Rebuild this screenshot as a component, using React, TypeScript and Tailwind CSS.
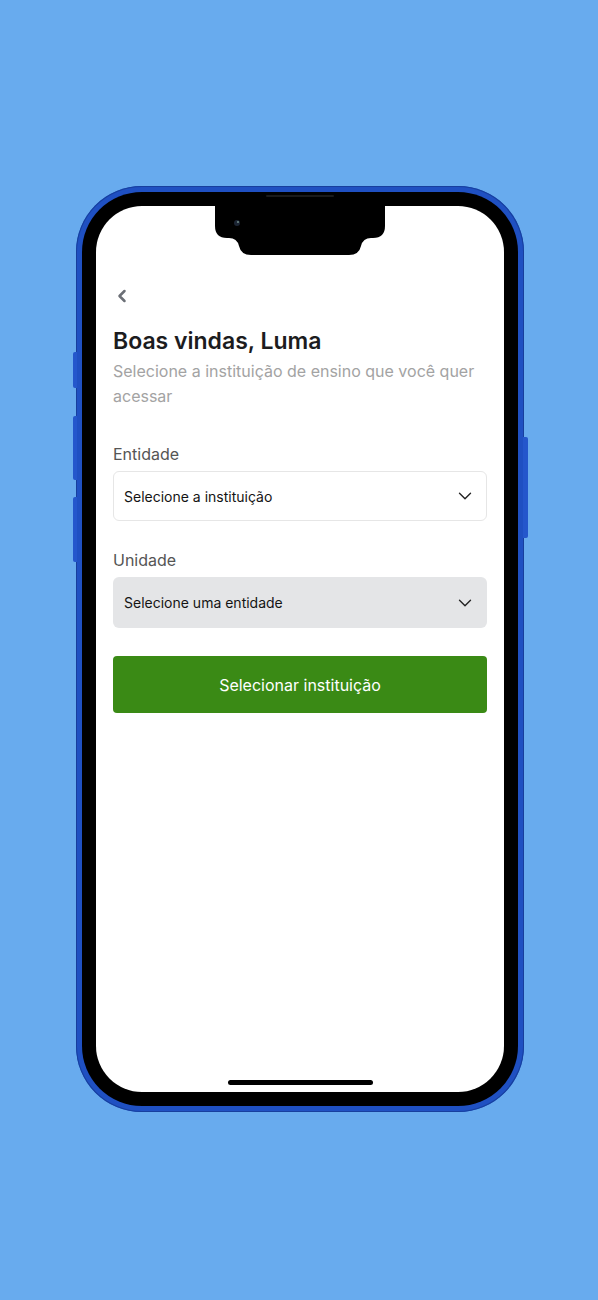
import React from 'react';
import { ChevronDown, ChevronLeft } from 'lucide-react';

const SelectBox: React.FC<{ text: string; disabled?: boolean }> = ({ text, disabled }) => (
  <div
    className={
      disabled
        ? 'flex h-[51px] items-center justify-between rounded-[6px] bg-[#e4e5e7] pl-[11px] pr-[11px]'
        : 'flex h-[50px] items-center justify-between rounded-[6px] border border-[#e6e6e6] bg-white pl-[10px] pr-[10px]'
    }
  >
    <span className="text-[14px] text-[#141414]">{text}</span>
    <ChevronDown className="h-[22px] w-[22px] text-[#222]" strokeWidth={1.5} />
  </div>
);

const App: React.FC = () => {
  return (
    <div
      className="flex h-[1300px] w-full justify-center bg-[#68abee] pt-[186px]"
      style={{ fontFamily: 'Inter, "Noto Sans", sans-serif' }}
    >
      {/* Phone frame */}
      <div className="relative ml-[2px] h-[926px] w-[448px] rounded-[66px] bg-[#1f50c2] p-[6px] shadow-[inset_0_0_0_1px_#173f9e]">
        {/* side buttons */}
        <div className="absolute left-[-3px] top-[166px] h-[36px] w-[4px] rounded-l-[2px] bg-[#2457cc]" />
        <div className="absolute left-[-3px] top-[230px] h-[64px] w-[4px] rounded-l-[2px] bg-[#2457cc]" />
        <div className="absolute left-[-3px] top-[311px] h-[65px] w-[4px] rounded-l-[2px] bg-[#2457cc]" />
        <div className="absolute right-[-4px] top-[251px] h-[101px] w-[5px] rounded-r-[2px] bg-[#2457cc]" />

        <div className="h-full w-full rounded-[60px] bg-black p-[14px]">
          {/* speaker */}
          <div className="absolute left-[190px] top-[9px] h-[2px] w-[68px] rounded-full bg-[#1a1a1a]" />

          <div className="relative flex h-full flex-col overflow-hidden rounded-[46px] bg-white px-[17px] pt-[78px]">
            {/* notch */}
            <svg className="absolute left-[119px] top-0" width="170" height="49" viewBox="0 0 170 49">
              <path
                d="M-8,0 H178 Q170,0 170,8 V20 Q170,32 158,32 H156 Q148,32 146,40 Q144,49 134,49 H36 Q26,49 24,40 Q22,32 14,32 H12 Q0,32 0,20 V8 Q0,0 -8,0 Z"
                fill="#000"
              />
              <circle cx="22" cy="17" r="3" fill="#1b2433" />
              <circle cx="23" cy="16" r="1" fill="#6f8a86" />
            </svg>

            <div className="flex h-[24px] items-center">
              <ChevronLeft className="ml-[-1px] h-[20px] w-[20px] text-[#6b6f76]" strokeWidth={3} />
            </div>

            <h1 className="mt-[18px] text-[23px] font-semibold leading-[30px] text-[#1c1c1e]">
              Boas vindas, Luma
            </h1>
            <p className="mt-[3px] text-[16px] leading-[25px] text-[#a3a3a3]">
              Selecione a instituição de ensino que você quer acessar
            </p>

            <label className="mt-[33px] text-[16px] leading-[24px] text-[#555]">Entidade</label>
            <div className="mt-[5px]">
              <SelectBox text="Selecione a instituição" />
            </div>

            <label className="mt-[27px] text-[16px] leading-[24px] text-[#555]">Unidade</label>
            <div className="mt-[5px]">
              <SelectBox text="Selecione uma entidade" disabled />
            </div>

            <button className="mt-[28px] flex h-[57px] items-center justify-center rounded-[4px] bg-[#3a8a15] text-[16px] text-white">
              Selecionar instituição
            </button>

            {/* home indicator */}
            <div className="absolute bottom-[7px] left-[132px] h-[5px] w-[145px] rounded-full bg-black" />
          </div>
        </div>
      </div>
    </div>
  );
};

export default App;
